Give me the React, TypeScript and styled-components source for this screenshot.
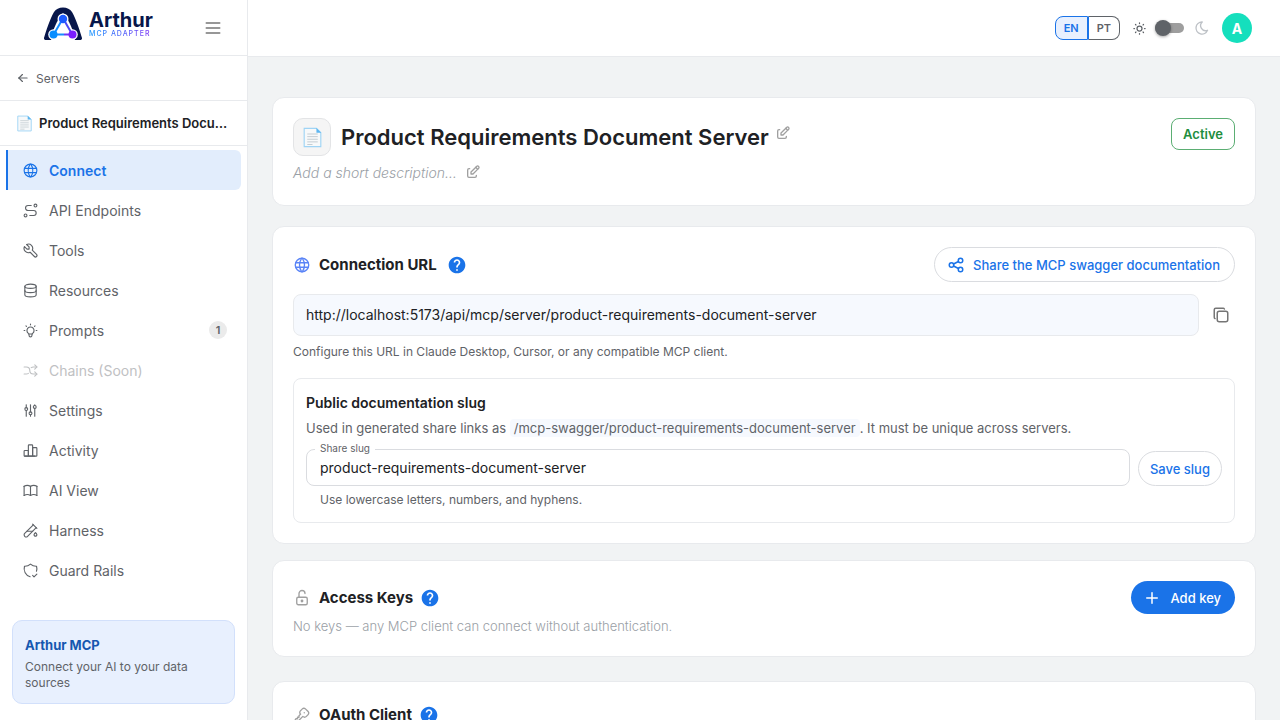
import React, { useState } from "react";
import styled, { createGlobalStyle } from "styled-components";
import { MdHelp } from "react-icons/md";
import type { IconType } from "react-icons";
import {
  TbAdjustments,
  TbArrowLeft,
  TbArrowsShuffle,
  TbBook,
  TbBulb,
  TbChartBar,
  TbCopy,
  TbDatabase,
  TbEdit,
  TbKey,
  TbLockOpen,
  TbMenu2,
  TbMoon,
  TbPlus,
  TbRoute,
  TbShare,
  TbShieldCheck,
  TbSun,
  TbTestPipe,
  TbTool,
  TbWorld,
} from "react-icons/tb";

const c = {
  blue: "#1a73e8",
  text: "#202124",
  muted: "#5f6368",
  faint: "#9aa0a6",
  grey: "#a0a0a0",
  line: "#e8eaed",
  control: "#dadce0",
  page: "#f1f3f4",
  field: "#f6f9fe",
};

const GlobalStyle = createGlobalStyle`
  *, *::before, *::after { box-sizing: border-box; }
  body { margin: 0; background: ${c.page}; color: ${c.text}; font-family: "Inter", "Noto Sans", sans-serif; font-size: 14px; }
  button, input { font: inherit; color: inherit; }
  button { cursor: pointer; }
  h1, h2, h3, p, ul { margin: 0; padding: 0; }
  a { color: inherit; text-decoration: none; }
  svg { flex: none; }
`;

const Shell = styled.div`
  display: grid;
  grid-template-columns: 248px minmax(0, 1fr);
  height: 100vh;
`;

const Sidebar = styled.aside`
  display: flex;
  flex-direction: column;
  background: #fff;
  border-right: 1px solid ${c.line};
`;

const Brand = styled.div`
  display: flex;
  align-items: center;
  justify-content: space-between;
  height: 56px;
  padding: 0 24px 0 42px;
  border-bottom: 1px solid ${c.line};
`;

const Logo = styled.a`
  display: flex;
  align-items: center;
  gap: 5px;
  padding-bottom: 8px;
`;

const Wordmark = styled.span`
  display: flex;
  flex-direction: column;
  font-size: 20px;
  line-height: 20px;
  font-weight: 700;
  color: #07164a;
`;

const Tagline = styled.small`
  width: max-content;
  font-size: 7px;
  line-height: 8px;
  font-weight: 500;
  letter-spacing: 1px;
  color: transparent;
  background: linear-gradient(90deg, #1495ff, #7b35f5);
  background-clip: text;
`;

const IconButton = styled.button<{ $tone?: string; $size?: number }>`
  display: inline-flex;
  align-items: center;
  justify-content: center;
  flex: none;
  width: ${(p) => p.$size ?? 16}px;
  height: ${(p) => p.$size ?? 16}px;
  padding: 0;
  border: 0;
  background: none;
  color: ${(p) => p.$tone ?? c.muted};
`;

const BackLink = styled.a`
  display: flex;
  align-items: center;
  gap: 6px;
  height: 45px;
  padding: 0 16px;
  border-bottom: 1px solid ${c.line};
  font-size: 12px;
  color: ${c.muted};
`;

const ServerName = styled.div`
  display: flex;
  align-items: center;
  gap: 6px;
  height: 45px;
  padding: 0 12px 0 16px;
  border-bottom: 1px solid ${c.line};
  font-size: 13px;
  font-weight: 600;
`;

const Ellipsis = styled.span`
  min-width: 0;
  overflow: hidden;
  white-space: nowrap;
  text-overflow: ellipsis;
`;

const NavList = styled.ul`
  flex: 1;
  padding: 4px 6px;
  list-style: none;
`;

const NavLink = styled.a<{ $active?: boolean; $disabled?: boolean }>`
  display: flex;
  align-items: center;
  gap: 10px;
  height: 40px;
  padding: 0 14px;
  border-left: 2px solid ${(p) => (p.$active ? c.blue : "transparent")};
  border-radius: 0 6px 6px 0;
  background: ${(p) => (p.$active ? "#e2edfc" : "transparent")};
  color: ${(p) => (p.$active ? c.blue : p.$disabled ? "#bfc1c3" : c.muted)};
  font-weight: ${(p) => (p.$active ? 600 : 400)};
`;

const Count = styled.span`
  display: grid;
  place-items: center;
  width: 18px;
  height: 18px;
  margin-left: auto;
  border-radius: 9px;
  background: #ebebeb;
  font-size: 11px;
  font-weight: 600;
`;

const Promo = styled.section`
  margin: 0 12px 16px;
  padding: 16px 12px 12px;
  border: 1px solid #d2e0fb;
  border-radius: 10px;
  background: #e8f0fe;
  font-size: 12px;
  line-height: 16px;
  color: ${c.muted};
`;

const PromoTitle = styled.h2`
  margin-bottom: 5px;
  font-size: 13px;
  line-height: 17px;
  font-weight: 700;
  color: #1557b0;
`;

const Column = styled.div`
  display: flex;
  flex-direction: column;
  min-width: 0;
  min-height: 0;
`;

const TopBar = styled.header`
  display: flex;
  flex: none;
  align-items: center;
  justify-content: flex-end;
  height: 57px;
  padding: 0 28px;
  background: #fff;
  border-bottom: 1px solid ${c.line};
  color: ${c.muted};
`;

const Languages = styled.div`
  display: flex;
  margin-right: 12px;
`;

const Language = styled.button<{ $on?: boolean }>`
  height: 24px;
  padding: 0 8px;
  border: 1px solid ${(p) => (p.$on ? c.blue : c.muted)};
  background: ${(p) => (p.$on ? "#e8f0fe" : "#fff")};
  color: ${(p) => (p.$on ? c.blue : c.muted)};
  font-size: 11px;
  font-weight: 600;
  &:first-child { border-radius: 8px 0 0 8px; }
  &:last-child { border-left-color: ${c.blue}; border-radius: 0 8px 8px 0; }
`;

const Switch = styled.input`
  appearance: none;
  display: flex;
  align-items: center;
  width: 29px;
  height: 10px;
  margin: 0 10px 0 8px;
  border-radius: 5px;
  background: #9e9e9e;
  cursor: pointer;
  &::before {
    content: "";
    width: 16px;
    height: 16px;
    border-radius: 50%;
    background: ${c.muted};
    box-shadow: 0 1px 3px rgba(0, 0, 0, 0.35);
  }
  &:checked { justify-content: flex-end; }
`;

const MoonMark = styled.span`
  display: flex;
  color: #bdc1c6;
`;

const Avatar = styled.button`
  width: 30px;
  height: 30px;
  margin-left: 12px;
  padding: 0;
  border: 0;
  border-radius: 50%;
  background: #15dfbd;
  color: #fff;
  font-weight: 700;
`;

const Content = styled.main`
  flex: 1;
  min-height: 0;
  padding: 40px 24px 24px;
  overflow-y: auto;
  scrollbar-width: none;
`;

const Card = styled.section<{ $gap?: number }>`
  margin-bottom: ${(p) => p.$gap ?? 16}px;
  padding: 20px;
  border: 1px solid ${c.line};
  border-radius: 12px;
  background: #fff;
`;

const Row = styled.div<{ $gap?: number; $between?: boolean; $top?: boolean }>`
  display: flex;
  align-items: ${(p) => (p.$top ? "flex-start" : "center")};
  justify-content: ${(p) => (p.$between ? "space-between" : "flex-start")};
  gap: ${(p) => p.$gap ?? 8}px;
  min-width: 0;
`;

const HeadingRow = styled(Row)`
  min-height: 26px;
`;

const ServerIcon = styled.span`
  display: grid;
  place-items: center;
  width: 38px;
  height: 38px;
  border: 1px solid #e3e4e6;
  border-radius: 10px;
  background: #f5f5f5;
`;

const TitleGroup = styled.div`
  display: flex;
  align-items: flex-start;
  gap: 6px;
`;

const TitleEdit = styled(IconButton)`
  margin-top: 3px;
`;

const PageTitle = styled.h1`
  font-size: 22px;
  line-height: 30px;
  font-weight: 600;
`;

const Status = styled.span`
  display: grid;
  place-items: center;
  height: 32px;
  padding: 0 11px;
  border: 1px solid #5bae73;
  border-radius: 8px;
  color: #1e8e3e;
  font-size: 13px;
  font-weight: 600;
`;

const Description = styled(Row)`
  height: 20px;
  margin: 6px 0 3px;
  color: ${c.faint};
  font-style: italic;
  font-weight: 300;
`;

const SectionTitle = styled.h2`
  font-size: 15px;
  line-height: 20px;
  font-weight: 700;
`;

const SectionIcon = styled.span<{ $tone: string }>`
  display: grid;
  place-items: center;
  width: 18px;
  height: 18px;
  color: ${(p) => p.$tone};
`;

const PillButton = styled.button<{ $filled?: boolean; $icon?: boolean }>`
  display: inline-flex;
  align-items: center;
  flex: none;
  gap: ${(p) => (p.$filled ? 10 : 8)}px;
  height: ${(p) => (p.$filled ? 33 : 35)}px;
  padding: 0 ${(p) => (p.$icon ? 14 : 11)}px 0 ${(p) => (p.$icon ? 12 : 11)}px;
  border: ${(p) => (p.$filled ? "0" : `1px solid ${c.control}`)};
  border-radius: 18px;
  background: ${(p) => (p.$filled ? c.blue : "#fff")};
  color: ${(p) => (p.$filled ? "#fff" : c.blue)};
  font-size: 13px;
  font-weight: 500;
`;

const UrlBox = styled.code`
  flex: 1;
  min-width: 0;
  padding: 10px 12px;
  border: 1px solid ${c.line};
  border-radius: 8px;
  background: ${c.field};
  font-family: inherit;
  font-size: 14px;
  line-height: 20px;
`;

const UrlRow = styled(Row)`
  margin-top: 12px;
`;

const Hint = styled.p<{ $indent?: boolean }>`
  margin-top: ${(p) => (p.$indent ? 6 : 8)}px;
  margin-left: ${(p) => (p.$indent ? 14 : 0)}px;
  font-size: 12px;
  line-height: 16px;
  color: ${c.muted};
`;

const SlugPanel = styled.section`
  margin-top: 18px;
  padding: 14px 12px;
  border: 1px solid ${c.line};
  border-radius: 8px;
`;

const SlugTitle = styled.h3`
  margin-bottom: 5px;
  font-size: 14px;
  line-height: 20px;
  font-weight: 600;
`;

const Body = styled.p`
  font-size: 13px;
  line-height: 20px;
  color: ${c.muted};
`;

const KeysNote = styled(Body)`
  margin-top: 2px;
  color: ${c.faint};
  font-weight: 300;
`;

const SlugCode = styled.code`
  padding: 1px 4px;
  border-radius: 4px;
  background: ${c.field};
  font-family: inherit;
`;

const SlugRow = styled.div`
  display: flex;
  align-items: flex-end;
  gap: 8px;
  margin-top: 11px;
`;

const Field = styled.div`
  position: relative;
  flex: 1;
  min-width: 0;
`;

const FieldLabel = styled.label`
  position: absolute;
  top: -8px;
  left: 9px;
  padding: 0 5px;
  background: #fff;
  font-size: 10px;
  line-height: 14px;
  color: ${c.muted};
`;

const TextInput = styled.input`
  display: block;
  width: 100%;
  height: 37px;
  padding: 0 13px;
  border: 1px solid ${c.control};
  border-radius: 8px;
  background: #fff;
  font-size: 14px;
`;

function PageGlyph({ size }: { size: number }) {
  return (
    <svg width={size} height={size} viewBox="0 0 24 24" aria-hidden="true">
      <path d="M2.5 1.5h14l5 5v16h-19Z" fill="#f7f9fa" stroke="#9fd4f5" strokeWidth="1.3" />
      <path d="M16.5 1v5.5H22Z" fill="#5db6f0" />
      <path d="M6 8h12M6 11h12M6 14h12M6 17h12M6 20h6" stroke="#c3cbd0" strokeWidth="1.1" />
    </svg>
  );
}

function LogoMark() {
  return (
    <svg width="42" height="34" viewBox="0 0 42 34" aria-hidden="true">
      <path d="M2 31C4 24 8 12 12 5c2-3 5-4.5 9-4.5S28 2 30 5c4 7 8 19 10 26 .3 1.5-1 2.3-3 2L5 33c-2 .3-3.3-.5-3-2Z" fill="#07164a" />
      <path d="M21 6C15 13 10 24 9 34h24C32 24 27 13 21 6Z" fill="#fff" />
      <circle cx="21" cy="12" r="5.5" fill="#fff" />
      <circle cx="11.5" cy="27.5" r="5.3" fill="#fff" />
      <circle cx="30.5" cy="27.5" r="5.3" fill="#fff" />
      <path d="M20 13 12 27" stroke="#168cff" strokeWidth="2" />
      <path d="m22 13 8 14" stroke="#4c49f4" strokeWidth="2" />
      <path d="M12 27.5h10" stroke="#168cff" strokeWidth="2" />
      <path d="M22 27.5h8" stroke="#6b38f5" strokeWidth="2" />
      <circle cx="21" cy="12" r="4.2" fill="#1d5cff" />
      <circle cx="11.5" cy="27.5" r="4" fill="#078dff" />
      <circle cx="30.5" cy="27.5" r="4" fill="#7b1fff" />
    </svg>
  );
}

type NavItem = { icon: IconType; label: string; active?: boolean; disabled?: boolean; count?: number };

const navItems: NavItem[] = [
  { icon: TbWorld, label: "Connect", active: true },
  { icon: TbRoute, label: "API Endpoints" },
  { icon: TbTool, label: "Tools" },
  { icon: TbDatabase, label: "Resources" },
  { icon: TbBulb, label: "Prompts", count: 1 },
  { icon: TbArrowsShuffle, label: "Chains (Soon)", disabled: true },
  { icon: TbAdjustments, label: "Settings" },
  { icon: TbChartBar, label: "Activity" },
  { icon: TbBook, label: "AI View" },
  { icon: TbTestPipe, label: "Harness" },
  { icon: TbShieldCheck, label: "Guard Rails" },
];

type HeadingProps = { icon: IconType; tone: string; title: string; helpSize?: number };

function Heading({ icon: Glyph, tone, title, helpSize = 18 }: HeadingProps) {
  return (
    <HeadingRow>
      <SectionIcon $tone={tone}><Glyph size={18} strokeWidth={1.8} /></SectionIcon>
      <SectionTitle>{title}</SectionTitle>
      <IconButton aria-label={`Help: ${title}`} $tone={c.blue} $size={helpSize}><MdHelp size={20} /></IconButton>
    </HeadingRow>
  );
}

export default function App() {
  const [slug, setSlug] = useState("product-requirements-document-server");
  const [dark, setDark] = useState(false);
  const [lang, setLang] = useState("EN");

  return (
    <>
      <GlobalStyle />
      <Shell>
        <Sidebar>
          <Brand>
            <Logo href="#" aria-label="Arthur MCP Adapter">
              <LogoMark />
              <Wordmark>Arthur<Tagline>MCP ADAPTER</Tagline></Wordmark>
            </Logo>
            <IconButton aria-label="Toggle menu" $tone="#757575" $size={20}><TbMenu2 size={20} /></IconButton>
          </Brand>
          <BackLink href="#"><TbArrowLeft size={14} />Servers</BackLink>
          <ServerName><PageGlyph size={17} /><Ellipsis>Product Requirements Document Server</Ellipsis></ServerName>
          <NavList>
            {navItems.map(({ icon: Glyph, label, active, disabled, count }) => (
              <li key={label}>
                <NavLink href="#" $active={active} $disabled={disabled}>
                  <Glyph size={17} strokeWidth={1.6} />
                  {label}
                  {count && <Count>{count}</Count>}
                </NavLink>
              </li>
            ))}
          </NavList>
          <Promo>
            <PromoTitle>Arthur MCP</PromoTitle>
            <p>Connect your AI to your data sources</p>
          </Promo>
        </Sidebar>

        <Column>
          <TopBar>
            <Languages>
              {["EN", "PT"].map((l) => (
                <Language key={l} $on={lang === l} onClick={() => setLang(l)}>{l}</Language>
              ))}
            </Languages>
            <TbSun size={15} />
            <Switch type="checkbox" aria-label="Dark mode" checked={dark} onChange={() => setDark(!dark)} />
            <MoonMark><TbMoon size={16} /></MoonMark>
            <Avatar>A</Avatar>
          </TopBar>

          <Content>
            <Card $gap={20}>
              <Row $between $top>
                <Row $gap={10}>
                  <ServerIcon><PageGlyph size={21} /></ServerIcon>
                  <TitleGroup>
                    <PageTitle>Product Requirements Document Server</PageTitle>
                    <TitleEdit aria-label="Edit name" $tone={c.grey}><TbEdit size={16} /></TitleEdit>
                  </TitleGroup>
                </Row>
                <Status>Active</Status>
              </Row>
              <Description>
                Add a short description…
                <IconButton aria-label="Edit description" $tone={c.grey}><TbEdit size={16} /></IconButton>
              </Description>
            </Card>

            <Card>
              <Row $between>
                <Heading icon={TbWorld} tone="#5b85f7" title="Connection URL" helpSize={24} />
                <PillButton $icon><TbShare size={18} />Share the MCP swagger documentation</PillButton>
              </Row>
              <UrlRow>
                <UrlBox>http://localhost:5173/api/mcp/server/product-requirements-document-server</UrlBox>
                <IconButton aria-label="Copy URL" $tone="#757575" $size={28}><TbCopy size={18} /></IconButton>
              </UrlRow>
              <Hint>Configure this URL in Claude Desktop, Cursor, or any compatible MCP client.</Hint>
              <SlugPanel>
                <SlugTitle>Public documentation slug</SlugTitle>
                <Body>
                  Used in generated share links as <SlugCode>/mcp-swagger/product-requirements-document-server</SlugCode>. It must be unique across servers.
                </Body>
                <SlugRow>
                  <Field>
                    <FieldLabel htmlFor="slug">Share slug</FieldLabel>
                    <TextInput id="slug" value={slug} onChange={(e) => setSlug(e.target.value)} />
                  </Field>
                  <PillButton>Save slug</PillButton>
                </SlugRow>
                <Hint $indent>Use lowercase letters, numbers, and hyphens.</Hint>
              </SlugPanel>
            </Card>

            <Card $gap={24}>
              <Row $between>
                <Heading icon={TbLockOpen} tone={c.grey} title="Access Keys" />
                <PillButton $filled $icon><TbPlus size={18} />Add key</PillButton>
              </Row>
              <KeysNote>No keys — any MCP client can connect without authentication.</KeysNote>
            </Card>

            <Card>
              <Heading icon={TbKey} tone={c.grey} title="OAuth Client" />
            </Card>
          </Content>
        </Column>
      </Shell>
    </>
  );
}
